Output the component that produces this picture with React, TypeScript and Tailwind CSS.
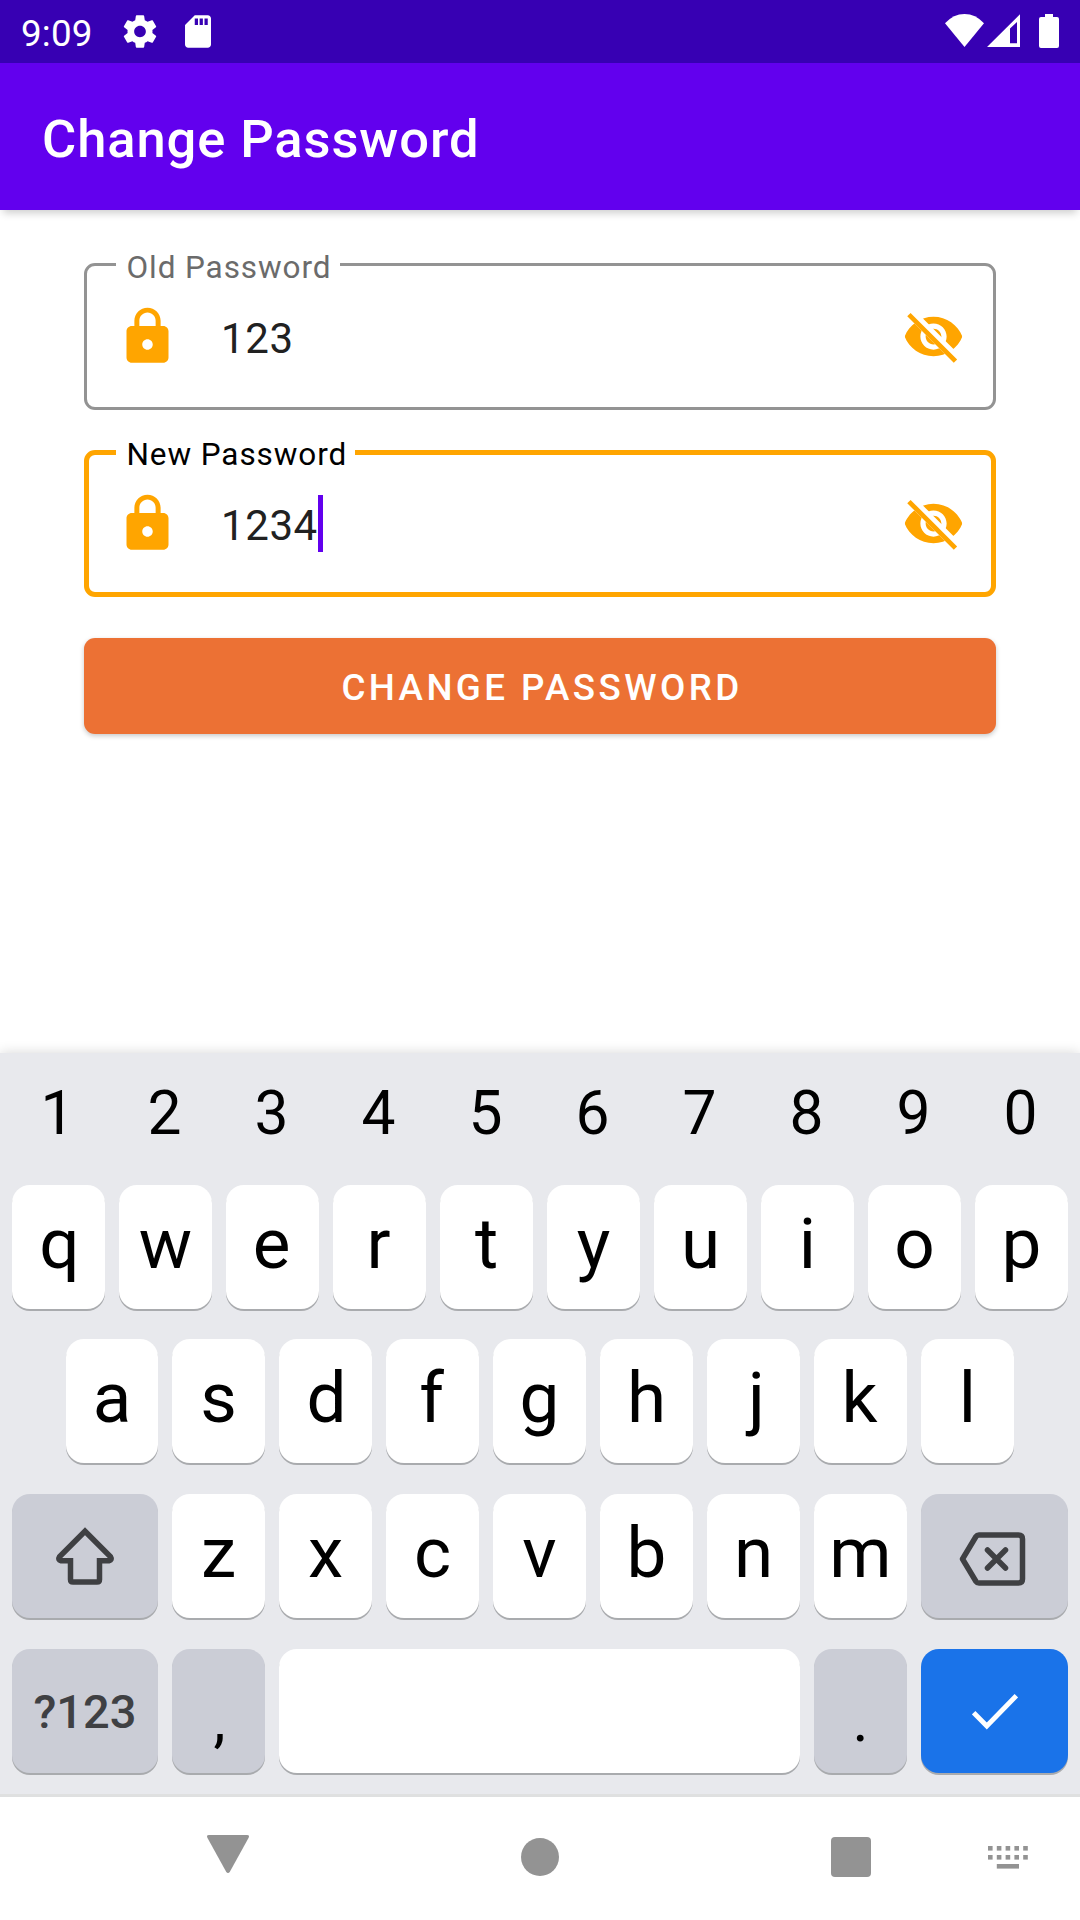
import type { ReactNode } from "react";

function StatusBar() {
  return (
    <div className="flex h-[63px] items-start justify-between bg-[#3700b3] text-white">
      <div className="flex items-start">
        <span className="ml-[21px] mt-[2px] w-[71px] whitespace-nowrap text-[36.75px] leading-[63px] tracking-[0.2px]">9:09</span>
        <svg className="ml-[28px] mt-[12px] h-[39px] w-[40px]" viewBox="0 0 24 24" preserveAspectRatio="none" fill="currentColor">
          <path d="M19.43 12.98c.04-.32.07-.64.07-.98s-.03-.66-.07-.98l2.11-1.65c.19-.15.24-.42.12-.64l-2-3.46c-.12-.22-.39-.3-.61-.22l-2.49 1c-.52-.4-1.08-.73-1.69-.98l-.38-2.65C14.46 2.18 14.25 2 14 2h-4c-.25 0-.46.18-.49.42l-.38 2.65c-.61.25-1.17.59-1.69.98l-2.49-1c-.23-.09-.49 0-.61.22l-2 3.46c-.13.22-.07.49.12.64l2.11 1.65c-.04.32-.07.65-.07.98s.03.66.07.98l-2.11 1.65c-.19.15-.24.42-.12.64l2 3.46c.12.22.39.3.61.22l2.49-1c.52.4 1.08.73 1.69.98l.38 2.65c.03.24.24.42.49.42h4c.25 0 .46-.18.49-.42l.38-2.65c.61-.25 1.17-.59 1.69-.98l2.49 1c.23.09.49 0 .61-.22l2-3.46c.12-.22.07-.49-.12-.64l-2.11-1.65zM12 15.5c-1.93 0-3.5-1.57-3.5-3.5s1.57-3.5 3.5-3.5 3.5 1.57 3.5 3.5-1.57 3.5-3.5 3.5z" />
        </svg>
        <svg className="ml-[18px] mt-[12px] h-[39px] w-[40px]" viewBox="0 0 24 24" fill="currentColor">
          <path d="M18 2h-8L4.02 8 4 20c0 1.1.9 2 2 2h12c1.1 0 2-.9 2-2V4c0-1.1-.9-2-2-2zm-6 6h-2V4h2v4zm3 0h-2V4h2v4zm3 0h-2V4h2v4z" />
        </svg>
      </div>
      <div className="mr-[21px] mt-[14px] flex items-start">
        <svg className="h-[33px] w-[39px]" viewBox="0 0 39 33" fill="currentColor">
          <path d="M19.5 33 0 9.3Q8.400 0 19.500 0T39 9.300Z" />
        </svg>
        <svg className="ml-[3px] h-[33px] w-[33px]" viewBox="0 0 33 33" fill="currentColor">
          <path fillRule="evenodd" d="M33 .3V33H0ZM23 14.500V29.300H30V8Z" />
        </svg>
        <svg className="ml-[19px] h-[34px] w-[20px]" viewBox="0 0 20 34" fill="currentColor">
          <path d="M6 0h8v3h4q2 0 2 2v27q0 2-2 2H2q-2 0-2-2V5q0-2 2-2h4Z" />
        </svg>
      </div>
    </div>
  );
}

function LockIcon() {
  return (
    <svg className="h-[63px] w-[63px] text-[#ffa500]" viewBox="0 0 24 24" fill="currentColor">
      <path d="M18 8h-1V6c0-2.760-2.240-5-5-5S7 3.240 7 6v2H6c-1.100 0-2 .9-2 2v10c0 1.100.9 2 2 2h12c1.100 0 2-.9 2-2V10c0-1.100-.9-2-2-2zm-6 9c-1.100 0-2-.9-2-2s.9-2 2-2 2 .9 2 2-.9 2-2 2zm3.100-9H8.900V6c0-1.710 1.390-3.100 3.100-3.100 1.710 0 3.100 1.390 3.100 3.100v2z" />
    </svg>
  );
}

function HiddenEyeIcon({ id }: { id: string }) {
  return (
    <svg className="h-[63px] w-[63px] text-[#ffa500]" viewBox="0 0 24 24" fill="currentColor">
      <clipPath id={id}>
        <path d="M2 4.270 19.730 22 22.270 19.460 4.540 1.730V1H23V23H1V4.270Z" />
      </clipPath>
      <path
        clipPath={`url(#${id})`}
        d="M12 4.500C7 4.500 2.730 7.610 1 12c1.730 4.390 6 7.500 11 7.500s9.270-3.110 11-7.500c-1.730-4.390-6-7.500-11-7.500zM12 17c-2.760 0-5-2.240-5-5s2.240-5 5-5 5 2.240 5 5-2.240 5-5 5zm0-8c-1.660 0-3 1.340-3 3s1.340 3 3 3 3-1.340 3-3-1.340-3-3-3z"
      />
      <path d="M2 4.270 3.270 3 21 20.730 19.730 22Z" />
    </svg>
  );
}

function PasswordField({ id, label, value, focused = false }: { id: string; label: string; value: string; focused?: boolean }) {
  return (
    <div
      className={
        "relative h-[147px] rounded-[11px] " +
        (focused ? "border-[5px] border-[#ffa500]" : "border-[3px] border-[#939393]")
      }
    >
      <div
        className={
          "absolute h-[36px] whitespace-nowrap bg-white pl-[10.5px] text-[31.5px] leading-[36px] tracking-[0.9px] " +
          (focused ? "-top-[18px] left-[27px] w-[239px] text-black" : "-top-[16px] left-[29px] w-[224px] text-[#6b6b6b]")
        }
      >
        {label}
      </div>
      <div className={"flex h-full items-center " + (focused ? "pl-[27px] pr-[26px]" : "pl-[29px] pr-[28px]")}>
        <LockIcon />
        <div className="ml-[42px] mt-[3px] flex flex-1 items-center text-[42px] leading-[57px] tracking-[0.6px] text-[#212121]">
          <span>{value}</span>
          {focused && <span className="-mt-[3px] h-[57px] w-[5px] bg-[#6200ee]" />}
        </div>
        <HiddenEyeIcon id={id} />
      </div>
    </div>
  );
}

const KEY = "flex h-[124px] shrink-0 justify-center rounded-[18px] shadow-[0_2px_0_#a9abae] ";

/* Optical centring for glyphs whose ink sits off their advance width. */
const NUDGE: Record<string, string> = {
  q: "pl-[2px] ",
  d: "pl-[2px] ",
  j: "pl-[6px] ",
  e: "pr-[2px] ",
  r: "pr-[2px] ",
  f: "pr-[2px] ",
  k: "pr-[2px] ",
};

function LetterKey({ children, narrow = false }: { children: string; narrow?: boolean }) {
  return (
    <div
      className={
        KEY + "bg-white text-[71px] leading-[118px] text-black " + (NUDGE[children] ?? "") + (narrow ? "w-[92px]" : "w-[93px]")
      }
    >
      {children}
    </div>
  );
}

function GreyKey({ children, className }: { children: ReactNode; className: string }) {
  return <div className={KEY + "bg-[#cbcdd6] " + className}>{children}</div>;
}

function Keyboard() {
  return (
    <div className="h-[744px] border-b-[3px] border-[#dfe0e0] bg-[#e8e9ed] shadow-[0_0_12px_rgba(0,0,0,0.16)]">
      <div className="flex h-[132px] gap-[14px] pl-[11px] text-[60.500px] leading-[122px] text-black">
        {"1234567890".split("").map((n) => (
          <div key={n} className="w-[93px] text-center">{n}</div>
        ))}
      </div>
      <div className="flex h-[154px] gap-[14px] pl-[12px]">
        {"qwertyuiop".split("").map((c) => (
          <LetterKey key={c}>{c}</LetterKey>
        ))}
      </div>
      <div className="flex h-[155px] gap-[14px] pl-[66px]">
        {"asdfghjkl".split("").map((c) => (
          <LetterKey key={c} narrow={c === "a"}>{c}</LetterKey>
        ))}
      </div>
      <div className="flex h-[155px] gap-[14px] pl-[12px]">
        <GreyKey className="w-[146px] text-[#3f4043]">
          <svg className="mt-[33px] h-[60px] w-[60px]" viewBox="0 0 60 60" fill="none" stroke="currentColor" strokeWidth="5.500">
            <path d="M30 4.200 4.500 29.700Q2.500 33 6 33.700H15.500V52.500Q15.500 55 18 55H42Q44.500 55 44.500 52.500V33.700H54Q57.500 33 55.500 29.700Z" />
          </svg>
        </GreyKey>
        {"zxcvbnm".split("").map((c) => (
          <LetterKey key={c}>{c}</LetterKey>
        ))}
        <GreyKey className="w-[147px] pr-[3px] text-[#3f4043]">
          <svg className="mt-[38px] h-[54px] w-[68px]" viewBox="0 0 68 54" fill="none" stroke="currentColor" strokeWidth="5.500" strokeLinejoin="round">
            <path d="M20 3H59.500Q63.500 3 63.500 7V47Q63.500 51 59.500 51H20Q18 51 17 49.500L3.500 27 17 4.500Q18 3 20 3Z" />
            <path d="M28.500 18 46.500 36M46.500 18 28.500 36" strokeLinecap="round" />
          </svg>
        </GreyKey>
      </div>
      <div className="flex gap-[14px] pl-[12px]">
        <GreyKey className="w-[146px] text-[47px] font-medium leading-[126px] text-[#3f4043]">?123</GreyKey>
        <GreyKey className="w-[93px] pl-[2px] text-[61px] leading-[143px] text-black">,</GreyKey>
        <div className={KEY + "w-[521px] bg-white"} />
        <GreyKey className="w-[93px] text-[61px] leading-[143px] text-black">.</GreyKey>
        <div className={KEY + "w-[147px] bg-[#1a73e9] text-white"}>
          <svg className="mt-[45px] h-[36px] w-[46px]" viewBox="0 0 46 36" fill="none" stroke="currentColor" strokeWidth="4.800">
            <path d="M1.700 18.700 14.800 32 44.300 1.700" />
          </svg>
        </div>
      </div>
    </div>
  );
}

function NavigationBar() {
  return (
    <div className="flex h-[123px] items-start bg-white text-[#939393]">
      <svg className="ml-[207px] mt-[38px] h-[38px] w-[42px]" viewBox="0 0 42 38" fill="currentColor">
        <path d="M2 0H40Q43 0 41.500 3L23 36.500Q21 39.500 19 36.500L.5 3Q-1 0 2 0Z" />
      </svg>
      <div className="ml-[272px] mt-[41px] size-[38px] rounded-full bg-[#939393]" />
      <div className="ml-[272px] mt-[40px] size-[40px] rounded-[4px] bg-[#939393]" />
      <svg className="ml-[117px] mt-[49px] h-[24px] w-[40px]" viewBox="0 0 40 24" fill="currentColor">
        {[0, 8.8, 17.6, 26.4, 35.2].map((x) => (
          <g key={x}>
            <rect x={x} y="0" width="4.600" height="4.600" />
            <rect x={x} y="9" width="4.600" height="4.600" />
          </g>
        ))}
        <rect x="8.800" y="18" width="22.200" height="4.600" />
      </svg>
    </div>
  );
}

export default function App() {
  return (
    <div className="flex h-[1920px] w-[1080px] flex-col overflow-hidden bg-white font-['Roboto',sans-serif]">
      <StatusBar />
      <div className="h-[147px] bg-[#6200ee] pl-[42px] text-[52.500px] font-medium leading-[152px] tracking-[0.9px] text-white shadow-[0_6px_8px_-3px_rgba(0,0,0,0.2)]">
        Change Password
      </div>
      <div className="mt-[53px] flex flex-1 flex-col px-[84px]">
        <PasswordField id="eye-old" label="Old Password" value="123" />
        <div className="h-[40px]" />
        <PasswordField id="eye-new" label="New Password" value="1234" focused />
        <button className="mt-[41px] h-[96px] rounded-[11px] bg-[#ec7134] pl-[4px] pt-[4px] text-[36.750px] font-medium leading-[92px] tracking-[3.400px] text-white shadow-[0_2px_5px_rgba(0,0,0,0.22)]">
          CHANGE PASSWORD
        </button>
      </div>
      <Keyboard />
      <NavigationBar />
    </div>
  );
}
